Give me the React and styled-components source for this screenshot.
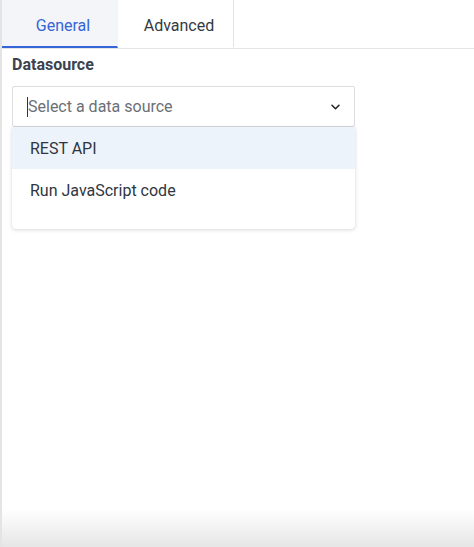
import React from 'react';
import styled, { createGlobalStyle } from 'styled-components';

const GlobalStyle = createGlobalStyle`
  html, body {
    margin: 0;
    padding: 0;
    background: #ffffff;
    font-family: Roboto, "Liberation Sans", Arial, sans-serif;
  }
`;

const Panel = styled.div`
  position: relative;
  width: 474px;
  height: 547px;
  box-sizing: border-box;
  border-left: 2px solid #e4e4e4;
  background: #ffffff;
  overflow: hidden;
  display: flex;
  flex-direction: column;
`;

const TabBar = styled.div`
  display: flex;
  height: 49px;
  border-bottom: 1px solid #e2e4e8;
  box-sizing: border-box;
`;

const Tab = styled.div`
  width: 116px;
  display: flex;
  align-items: center;
  justify-content: center;
  font-size: 16px;
  box-sizing: border-box;
  color: ${({ active }) => (active ? '#3565d6' : '#333a44')};
  background: ${({ active }) => (active ? '#f3f5f9' : '#ffffff')};
  border-bottom: 2px solid ${({ active }) => (active ? '#3565d6' : 'transparent')};
  border-right: 1px solid ${({ active }) => (active ? '#f3f5f9' : '#e2e4e8')};
  padding: 5px 0 0 7px;
`;

const Body = styled.div`
  padding: 6px 119px 0 10px;
  display: flex;
  flex-direction: column;
`;

const Label = styled.div`
  font-size: 16px;
  font-weight: 700;
  color: #3b4351;
  height: 20px;
  line-height: 20px;
  margin-bottom: 11px;
`;

const SelectBox = styled.div`
  height: 41px;
  border: 1px solid #dcdde0;
  border-radius: 2px;
  box-sizing: border-box;
  display: flex;
  align-items: center;
  padding: 0 14px 0 14px;
  font-size: 16px;
  color: #6b6f76;
`;

const Caret = styled.span`
  width: 1px;
  height: 20px;
  background: #333;
`;

const Placeholder = styled.span`
  flex: 1;
`;

const Menu = styled.div`
  border-radius: 0 0 4px 4px;
  box-shadow: 0 1px 4px rgba(0, 0, 0, 0.14), 0 0 1px rgba(0, 0, 0, 0.12);
  padding-bottom: 18px;
  background: #ffffff;
`;

const Option = styled.div`
  height: 42px;
  display: flex;
  align-items: center;
  padding-left: 18px;
  font-size: 16px;
  color: #2f3640;
  background: ${({ highlighted }) => (highlighted ? '#edf3fb' : '#ffffff')};
`;

const BottomFade = styled.div`
  position: absolute;
  left: 0;
  right: 0;
  bottom: 0;
  height: 38px;
  background: linear-gradient(to bottom, rgba(232, 232, 232, 0), #e6e6e6);
  pointer-events: none;
`;

const Chevron = () => (
  <svg width="9" height="6" viewBox="0 0 9 6" fill="none">
    <path d="M1 1.2l3.5 3.5 3.5-3.5" stroke="#222" strokeWidth="1.5" strokeLinecap="round" strokeLinejoin="round" />
  </svg>
);

export default function App() {
  return (
    <>
      <GlobalStyle />
      <Panel>
        <TabBar>
          <Tab active>General</Tab>
          <Tab>Advanced</Tab>
        </TabBar>
        <Body>
          <Label>Datasource</Label>
          <SelectBox>
            <Caret />
            <Placeholder>Select a data source</Placeholder>
            <Chevron />
          </SelectBox>
          <Menu>
            <Option highlighted>REST API</Option>
            <Option>Run JavaScript code</Option>
          </Menu>
        </Body>
        <BottomFade />
      </Panel>
    </>
  );
}
